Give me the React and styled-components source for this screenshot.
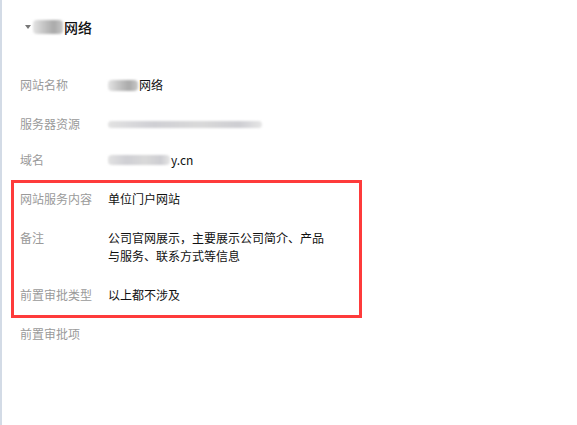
import React from "react";
import styled, { createGlobalStyle } from "styled-components";

const GlobalStyle = createGlobalStyle`
  html, body {
    margin: 0;
    padding: 0;
    background: #fff;
  }
  body {
    font-family: "Noto Sans CJK SC", "Liberation Sans", sans-serif;
  }
`;

const marked = [
  { label: "网站服务内容", value: "单位门户网站" },
  { label: "备注", value: "公司官网展示，主要展示公司简介、产品与服务、联系方式等信息" },
  { label: "前置审批类型", value: "以上都不涉及" },
];

const App = () => {
  const rows = [
    { label: "网站名称", value: <><Blur $w={30} $h={11} />网络</> },
    { label: "服务器资源", value: <Blur $w={154} $h={7} $light />, short: true },
    { label: "域名", value: <><Blur $w={62} $h={10} $light />y.cn</> },
  ];

  return (
    <>
      <GlobalStyle />
      <Page>
        <Header>
          <Caret />
          <Title>
            <Blur $w={30} $h={14} />
            网络
          </Title>
        </Header>
        <List>
          {rows.map((r) => (
            <Row key={r.label} $short={r.short}>
              <Label>{r.label}</Label>
              <Value>{r.value}</Value>
            </Row>
          ))}
          <Marked>
            {marked.map((r) => (
              <Row key={r.label}>
                <Label>{r.label}</Label>
                <Value>{r.value}</Value>
              </Row>
            ))}
          </Marked>
          <Row>
            <Label>前置审批项</Label>
            <Value />
          </Row>
        </List>
      </Page>
    </>
  );
};

export default App;

const Page = styled.div`
  height: 425px;
  box-sizing: border-box;
  border-left: 2px solid #d3dbe6;
  padding: 17px 0 0 18px;
`;

const Header = styled.div`
  display: flex;
  align-items: center;
  height: 20px;
  padding-left: 5px;
`;

const Caret = styled.span`
  width: 0;
  height: 0;
  border-left: 3px solid transparent;
  border-right: 3px solid transparent;
  border-top: 4px solid #777;
  margin-right: 2px;
`;

const Title = styled.div`
  display: flex;
  align-items: center;
  font-size: 14px;
  font-weight: 500;
  color: #111;
`;

const Blur = styled.span`
  display: inline-block;
  width: ${(p) => p.$w}px;
  height: ${(p) => p.$h}px;
  margin-right: 1px;
  border-radius: 4px;
  background: ${(p) =>
    p.$light
      ? "linear-gradient(90deg, #e2e2e2, #cfcfd4 30%, #d9d9d9 60%, #cdcdd2 85%, #e6e6e6)"
      : "linear-gradient(90deg, #e4e4e4, #bdbdbd 45%, #aaaaaa 70%, #c8c8c8)"};
  filter: blur(1px);
  vertical-align: middle;
`;

const List = styled.div`
  display: flex;
  flex-direction: column;
  gap: 21px;
  margin-top: 39px;
`;

const Row = styled.div`
  display: flex;
  font-size: 12px;
  line-height: 18px;
  min-height: 18px;
  ${(p) => p.$short && "margin-bottom: -3px;"}
`;

const Label = styled.div`
  width: 88px;
  flex-shrink: 0;
  color: #9a9a9a;
`;

const Value = styled.div`
  max-width: 222px;
  color: #111;
  display: flex;
  align-items: center;
  flex-wrap: wrap;
`;

const Marked = styled.div`
  display: flex;
  flex-direction: column;
  gap: 21px;
  width: 351px;
  box-sizing: border-box;
  margin: -10px 0 -14px -9px;
  padding: 7px 0 11px 6px;
  border: 3px solid #fe3b3b;
`;
